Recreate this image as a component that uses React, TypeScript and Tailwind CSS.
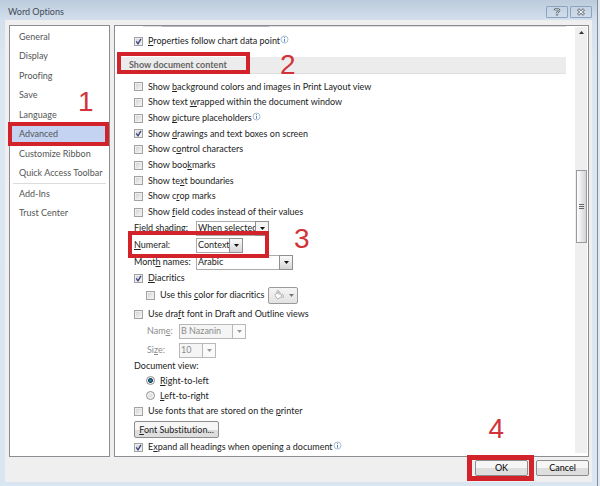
import type { ReactNode } from "react";
import { clsx } from "clsx";

const NAV_MAIN = [
  "General",
  "Display",
  "Proofing",
  "Save",
  "Language",
  "Advanced",
  "Customize Ribbon",
  "Quick Access Toolbar"
];
const NAV_EXTRA = ["Add-Ins", "Trust Center"];

// The letter after "&" is the keyboard accelerator and gets underlined
function Mnemonic({ text }: { text: string }) {
  const at = text.indexOf("&");
  if (at < 0) return <>{text}</>;
  return (
    <>
      {text.slice(0, at)}
      <u className="underline-offset-1">{text[at + 1]}</u>
      {text.slice(at + 2)}
    </>
  );
}

function InfoIcon() {
  return (
    <svg viewBox="0 0 9 9" className="w-[9px] h-[9px] -mt-1 shrink-0" fill="none">
      <circle cx="4.5" cy="4.5" r="3.5" stroke="#8fa9c4" strokeWidth="0.8" />
      <path d="M4.5 2.2v1M4.5 4v2.8" stroke="#5d87b5" strokeWidth="1" />
    </svg>
  );
}

interface CheckProps {
  label: string;
  checked?: boolean;
  info?: boolean;
}

function Check({ label, checked, info }: CheckProps) {
  return (
    <label className="flex items-center gap-[5px] whitespace-nowrap">
      <span className="relative flex w-[9px] h-[9px] shrink-0">
        <input
          type="checkbox"
          defaultChecked={checked}
          className="peer appearance-none w-full h-full border border-[#a2a2a2] bg-gradient-to-br from-[#cfcfd2] to-[#f8f8f8] shadow-[inset_0_0_0_1px_#efefef]"
        />
        <svg viewBox="0 0 9 9" className="absolute inset-0 hidden peer-checked:block pointer-events-none" fill="none">
          <path d="M2.2 4.3L4 6.8L7 1.8" stroke="#35407c" strokeWidth="1.3" />
        </svg>
      </span>
      <span className="flex items-center">
        <span><Mnemonic text={label} /></span>
        {info && <InfoIcon />}
      </span>
    </label>
  );
}

function Radio({ label, checked }: CheckProps) {
  return (
    <label className="flex items-center gap-[5px] h-[15px] ml-3">
      <input
        type="radio"
        name="document-view"
        defaultChecked={checked}
        className="appearance-none w-[9px] h-[9px] rounded-full border border-[#8e8e8e] bg-[radial-gradient(circle,#e2e2e2_30%,#fafafa_70%)] checked:bg-[radial-gradient(circle,#2c87b0_10%,#143b58_42%,#f4f4f4_56%)]"
      />
      <span><Mnemonic text={label} /></span>
    </label>
  );
}

interface ComboProps {
  id: string;
  value: string;
  className: string;
  disabled?: boolean;
  raised?: boolean;
}

function Combo({ id, value, className, disabled, raised }: ComboProps) {
  return (
    <span className={clsx("relative flex h-[15px]", className)}>
      <select
        id={id}
        disabled={disabled}
        className={clsx(
          "appearance-none w-full h-full border pl-px opacity-100",
          disabled ? "border-[#b8b8b8] bg-[#f5f5f5] text-[#8c8c8c]" : "border-[#ababab] bg-white text-[#222]"
        )}
      >
        <option>{value}</option>
      </select>
      <span
        className={clsx(
          "absolute right-0 top-0 w-[14px] h-[15px] border flex items-center justify-center pointer-events-none",
          disabled && "border-[#b8b8b8] bg-[#fafafa] text-[#999]",
          !disabled && "border-[#8f8f8f] text-[#111]",
          raised ? "bg-gradient-to-b from-[#fafafa] to-[#d6d6d6]" : "bg-[#f4f4f4]"
        )}
      >
        <svg viewBox="0 0 5 3" className="w-[5px] h-[3px]" fill="currentColor">
          <path d="M0 0h5L2.5 3z" />
        </svg>
      </span>
    </span>
  );
}

function FieldRow({ id, label, children }: { id: string; label: string; children: ReactNode }) {
  return (
    <div className="flex items-center h-4">
      <label htmlFor={id} className="w-[62px] whitespace-nowrap"><Mnemonic text={label} /></label>
      {children}
    </div>
  );
}

const BUTTON = "border border-[#8c8c8c] rounded-[2px] bg-gradient-to-b from-[#f6f6f6] from-50% to-[#dedede] to-50% text-center whitespace-nowrap";

function NavItem({ label }: { label: string }) {
  const active = label === "Advanced";
  return (
    <li className={clsx("flex-1 flex", active && "bg-[#c3d3f1]")}>
      <button className="w-full text-left pl-[9px] whitespace-nowrap">{label}</button>
    </li>
  );
}

function Sidebar() {
  return (
    <nav className="w-[101px] shrink-0 bg-white border border-[#8a8d91] text-[#555]">
      <ul className="flex flex-col h-[156px] mt-px">
        {NAV_MAIN.map((label) => <NavItem key={label} label={label} />)}
      </ul>
      <hr className="mx-[3px] border-[#dcdcdc]" />
      <ul className="flex flex-col h-[39px]">
        {NAV_EXTRA.map((label) => <NavItem key={label} label={label} />)}
      </ul>
    </nav>
  );
}

function Scrollbar() {
  return (
    <div className="w-3 shrink-0 bg-[#efefef] mr-px mt-px mb-[3px] flex flex-col items-center">
      <svg viewBox="0 0 5 3" className="w-[5px] h-[3px] mt-1" fill="#333">
        <path d="M0 3h5L2.5 0z" />
      </svg>
      <div className="mt-[136px] w-[11px] h-[73px] border border-[#9a9a9a] bg-gradient-to-r from-white to-[#d3d3d8] flex flex-col items-center justify-center gap-px">
        <span className="w-[5px] h-px bg-[#666]" />
        <span className="w-[5px] h-px bg-[#666]" />
        <span className="w-[5px] h-px bg-[#666]" />
      </div>
    </div>
  );
}

function Content() {
  return (
    <div className="flex-1 min-w-0 pl-1 pr-[9px] text-[#222]">
      <div className="h-px ml-6 bg-[#ddd]">
        <div className="ml-[19px] w-[107px] h-px bg-[#b5b5bd]" />
      </div>
      <div className="pl-[15px] h-4 mt-[6px] flex items-center">
        <Check label="&Properties follow chart data point" checked info />
      </div>
      <h2 className="mt-2 h-[17px] pl-[10px] flex items-center bg-[#ececec] border-b border-[#e0e0e0] font-bold text-[#666]">
        Show document content
      </h2>
      <div className="pl-[15px]">
        <div className="mt-[5px] h-[141px] grid grid-rows-9 items-center">
          <Check label="Show &background colors and images in Print Layout view" />
          <Check label="Show text &wrapped within the document window" />
          <Check label="Show &picture placeholders" info />
          <Check label="Show &drawings and text boxes on screen" checked />
          <Check label="Show c&ontrol characters" />
          <Check label="Show boo&kmarks" />
          <Check label="Show te&xt boundaries" />
          <Check label="Show c&rop marks" />
          <Check label="Show &field codes instead of their values" />
        </div>
        <FieldRow id="shading" label="Fi&eld shading:">
          <Combo id="shading" value="When selected" className="w-[73px]" />
        </FieldRow>
        <div className="mt-px">
          <FieldRow id="numeral" label="&Numeral:">
            <Combo id="numeral" value="Context" className="w-[47px]" raised />
          </FieldRow>
        </div>
        <div className="mt-px">
          <FieldRow id="months" label="Mont&h names:">
            <Combo id="months" value="Arabic" className="w-[97px]" raised />
          </FieldRow>
        </div>
        <div className="h-4 flex items-center">
          <Check label="&Diacritics" checked />
        </div>
        <div className="h-[18px] ml-3 flex items-center gap-1">
          <Check label="Use this &color for diacritics" />
          <button aria-label="Diacritics color" className="w-[30px] h-[17px] border border-[#9a9a9a] rounded-[2px] bg-gradient-to-b from-[#f5f5f5] to-[#e2e2e2] flex items-center justify-center gap-1">
            <svg viewBox="0 0 12 12" className="w-3 h-3" fill="none" stroke="#b0b0b0">
              <path d="M3 4.5L6.5 3L9 7.5L4.5 10L2 6.5z" fill="#fff" />
              <path d="M4 5V2.5C4 1 6 1 6 2.5V6M9 5c1.5.5 1.5 2 1.2 4" />
            </svg>
            <svg viewBox="0 0 5 3" className="w-[5px] h-[3px]" fill="#777">
              <path d="M0 0h5L2.5 3z" />
            </svg>
          </button>
        </div>
        <div className="h-4 mt-[2px] flex items-center">
          <Check label="Use dra&ft font in Draft and Outline views" />
        </div>
        <div className="ml-[13px] mt-px flex flex-col gap-[3px] text-[#8c8c8c]">
          <div className="flex items-center h-4">
            <label htmlFor="font-name" className="w-8"><Mnemonic text="Nam&e:" /></label>
            <Combo id="font-name" value="B Nazanin" className="w-[67px]" disabled />
          </div>
          <div className="flex items-center h-4">
            <label htmlFor="font-size" className="w-8"><Mnemonic text="Si&ze:" /></label>
            <Combo id="font-size" value="10" className="w-[37px]" disabled />
          </div>
        </div>
        <fieldset>
          <legend className="h-[15px] leading-[15px]">Document view:</legend>
          <Radio label="&Right-to-left" checked />
          <Radio label="&Left-to-right" />
        </fieldset>
        <div className="h-4 flex items-center">
          <Check label="Use fonts that are stored on the &printer" />
        </div>
        <button className={clsx(BUTTON, "block mt-[2px] w-[85px] h-[17px]")}>
          <Mnemonic text="&Font Substitution..." />
        </button>
        <div className="h-4 mt-px mb-px flex items-center">
          <Check label="E&xpand all headings when opening a document" checked info />
        </div>
      </div>
    </div>
  );
}

function TitleBar() {
  return (
    <header className="h-5 pl-[3px] flex items-center justify-between text-[#3f4a57]">
      <h1 className="pt-1">Word Options</h1>
      <div className="flex gap-[2px] pt-1">
        <button aria-label="Help" className="w-[22px] h-3 border border-[#8ba3c0] rounded-[1px] flex items-center justify-center">
          <svg viewBox="0 0 8 8" className="w-2 h-2" fill="none">
            <path d="M1.8 2.6C1.8.6 6.2.6 6.2 2.4C6.2 3.6 4 3.6 4 5.2M4 6v1.5" stroke="#55606e" strokeWidth="2.2" />
            <path d="M1.8 2.6C1.8.6 6.2.6 6.2 2.4C6.2 3.6 4 3.6 4 5.2M4 6.2v1" stroke="#fff" strokeWidth="0.8" />
          </svg>
        </button>
        <button aria-label="Close" className="w-[22px] h-3 border border-[#8ba3c0] rounded-[1px] flex items-center justify-center">
          <svg viewBox="0 0 8 8" className="w-2 h-2" fill="none">
            <path d="M1 1.2L7 6.8M7 1.2L1 6.8" stroke="#55606e" strokeWidth="2.8" />
            <path d="M1.4 1.6L6.6 6.4M6.6 1.6L1.4 6.4" stroke="#fff" strokeWidth="1.2" />
          </svg>
        </button>
      </div>
    </header>
  );
}

// Numbered red frames laid over the dialog to show the order of the steps
function Steps() {
  const frame = "absolute border-[#d2232a] pointer-events-none";
  const digit = "absolute text-[28px] leading-7 text-[#d2333a] font-['Liberation_Sans',Arial,sans-serif] pointer-events-none";
  return (
    <>
      <div className={clsx(frame, "left-2 top-[122px] w-[101px] h-6 border-4")} />
      <span className={clsx(digit, "left-[78px] top-[88px]")}>1</span>
      <div className={clsx(frame, "left-[117px] top-[52px] w-[133px] h-[22px] border-4")} />
      <span className={clsx(digit, "left-[280px] top-[51px]")}>2</span>
      <div className={clsx(frame, "left-[128px] top-[231px] w-[141px] h-[27px] border-4")} />
      <span className={clsx(digit, "left-[294px] top-[225px]")}>3</span>
      <div className={clsx(frame, "right-[66px] top-[455px] w-[67px] h-[26px] border-[5px]")} />
      <span className={clsx(digit, "right-[96px] top-[415px]")}>4</span>
    </>
  );
}

export default function App() {
  return (
    <div className="relative min-h-screen flex bg-[#eef1f5] font-['Lato','Open_Sans',sans-serif] text-[9px] leading-3 [font-variant-ligatures:none]">
      <div className="flex-1 min-w-0 flex flex-col px-[5px] pb-1 border-r border-[#7d8da0] bg-[linear-gradient(#bccbdc,#d3dfec_20px,#dbe6f1_60px,#d9e5f0)]">
        <TitleBar />
        <div className="flex-1 bg-[#efefef] pt-[5px] pl-1 pr-[3px]">
          <main className="flex gap-1">
            <Sidebar />
            <section className="flex-1 min-w-0 flex bg-white border border-[#8a8d91]">
              <Content />
              <Scrollbar />
            </section>
          </main>
          <footer className="flex justify-end gap-2 pt-[3px]">
            <button className={clsx(BUTTON, "w-[53px] h-4")}>OK</button>
            <button className={clsx(BUTTON, "w-[53px] h-4")}>Cancel</button>
          </footer>
        </div>
      </div>
      <div className="w-[2px] shrink-0 bg-[#e3e8ee]" />
      <Steps />
    </div>
  );
}
